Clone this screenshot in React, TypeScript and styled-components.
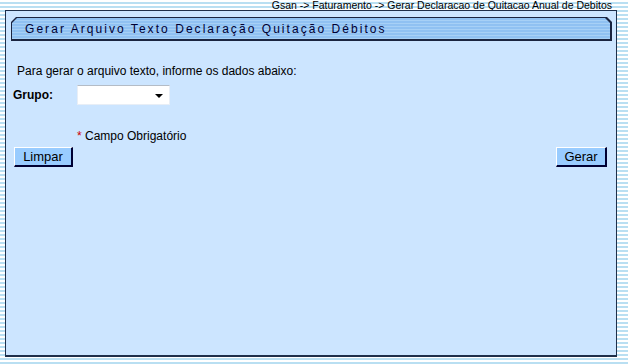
import React from 'react';
import styled, { createGlobalStyle } from 'styled-components';

const GlobalStyle = createGlobalStyle`
    html, body {
        margin: 0;
        padding: 0;
    }
    body {
        width: 628px;
        height: 364px;
        overflow: hidden;
        font-family: 'Liberation Sans', Arial, sans-serif;
        background: repeating-linear-gradient(
            to bottom,
            #ffffff 0px,
            #ffffff 2px,
            #b9dff2 2px,
            #b9dff2 4px
        );
    }
`;

const Page = styled.div`
    display: flex;
    flex-direction: column;
    width: 628px;
    height: 364px;
`;

const Breadcrumb = styled.div`
    height: 10px;
    line-height: 10px;
    font-size: 10.5px;
    color: #000000;
    text-align: right;
    padding-right: 16px;
    white-space: nowrap;
    overflow: hidden;
`;

const Panel = styled.div`
    box-sizing: border-box;
    margin-left: 5px;
    width: 612px;
    height: 347px;
    background: #cce5ff;
    border: 1px solid #1e2f4a;
    border-bottom-width: 2px;
    padding: 6px 4px 0 5px;
    display: flex;
    flex-direction: column;
`;

const bevel = 'polygon(5px 0, calc(100% - 5px) 0, 100% 5px, 100% 100%, 0 100%, 0 5px)';

const TitleFrame = styled.div`
    height: 24px;
    padding: 1px 2px 2px 1px;
    box-sizing: border-box;
    background: #1a2440;
    clip-path: ${bevel};
`;

const TitleFill = styled.div`
    height: 100%;
    clip-path: ${bevel};
    background: repeating-linear-gradient(
        to bottom,
        #90c1f2 0px,
        #90c1f2 2px,
        #a7d0f6 2px,
        #a7d0f6 3px
    );
    display: flex;
    align-items: center;
    padding-left: 13px;
    font-size: 12px;
    letter-spacing: 2.05px;
    color: #000033;
`;

const Body = styled.div`
    padding: 23px 0 0 2px;
    display: flex;
    flex-direction: column;
`;

const Intro = styled.div`
    font-size: 12px;
    color: #000000;
    padding-left: 4px;
    height: 14px;
    line-height: 14px;
`;

const FieldRow = styled.div`
    display: flex;
    align-items: center;
    margin-top: 7px;
    height: 20px;
`;

const Label = styled.label`
    width: 64px;
    font-size: 12px;
    font-weight: bold;
    color: #000000;
`;

const Select = styled.div`
    box-sizing: border-box;
    width: 93px;
    height: 20px;
    background: #ffffff;
    border: 1px solid #e8eef6;
    border-top-color: #b4bcc6;
    position: relative;
`;

const Arrow = styled.span`
    position: absolute;
    right: 6px;
    top: 8px;
    width: 0;
    height: 0;
    border-left: 4px solid transparent;
    border-right: 4px solid transparent;
    border-top: 4px solid #000000;
`;

const Required = styled.div`
    margin-top: 24px;
    padding-left: 64px;
    font-size: 12px;
    height: 14px;
    line-height: 14px;
    color: #000000;
`;

const Star = styled.span`
    color: #cc0000;
`;

const Actions = styled.div`
    display: flex;
    justify-content: space-between;
    margin-top: 4px;
    padding: 0 5px 0 1px;
`;

const Button = styled.button<{ $width: number }>`
    box-sizing: border-box;
    width: ${p => p.$width}px;
    height: 20px;
    padding: 0;
    background: #99ccff;
    border-style: solid;
    border-color: #ffffff #000033 #000033 #ffffff;
    border-width: 1px 2px 2px 1px;
    font-family: 'Liberation Sans', Arial, sans-serif;
    font-size: 13px;
    color: #000000;
    cursor: pointer;
`;

export default function App() {
    return (
        <Page>
            <GlobalStyle />
            <Breadcrumb>
                Gsan -&gt; Faturamento -&gt; Gerar Declaracao de Quitacao Anual de Debitos
            </Breadcrumb>
            <Panel>
                <TitleFrame>
                    <TitleFill>Gerar Arquivo Texto Declaração Quitação Débitos</TitleFill>
                </TitleFrame>
                <Body>
                    <Intro>Para gerar o arquivo texto, informe os dados abaixo:</Intro>
                    <FieldRow>
                        <Label>Grupo:</Label>
                        <Select>
                            <Arrow />
                        </Select>
                    </FieldRow>
                    <Required>
                        <Star>*</Star> Campo Obrigatório
                    </Required>
                    <Actions>
                        <Button $width={59}>Limpar</Button>
                        <Button $width={51}>Gerar</Button>
                    </Actions>
                </Body>
            </Panel>
        </Page>
    );
}
